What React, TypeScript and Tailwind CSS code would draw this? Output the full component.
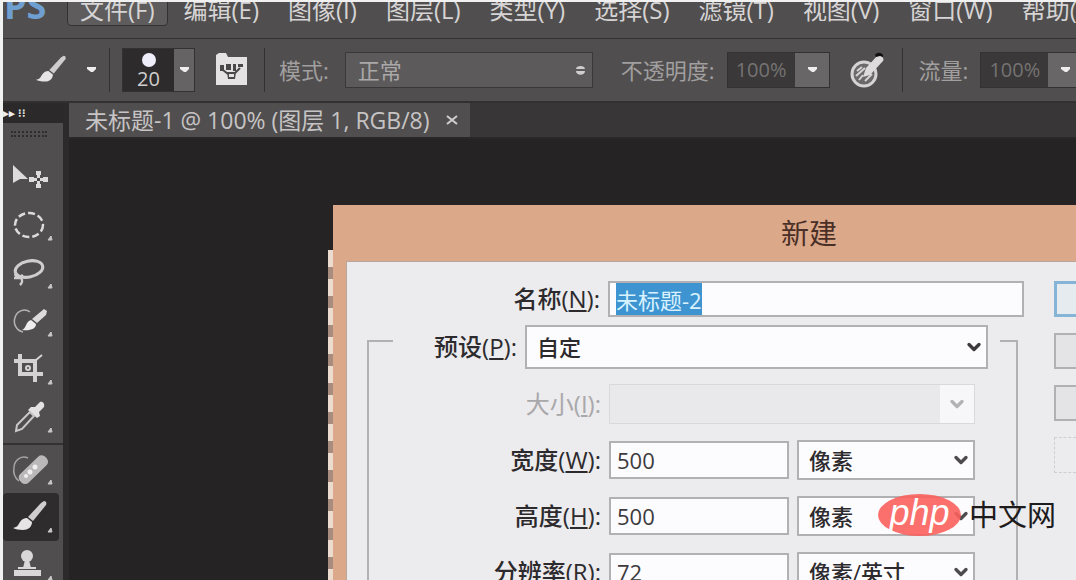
import { useEffect, useRef, type ReactNode } from 'react'
import { ChevronDown } from 'lucide-react'

const menus = [
  '文件(F)',
  '编辑(E)',
  '图像(I)',
  '图层(L)',
  '类型(Y)',
  '选择(S)',
  '滤镜(T)',
  '视图(V)',
  '窗口(W)',
  '帮助(H)',
]

function BrushShape() {
  return (
    <g>
      <path d="M41 8c2 0 3 2 2 4L30 28l-5-4L38 10z" fill="#cfcdcd" />
      <path d="M24 25l5 4c0 5-4 8-9 8-4 0-8-1-10-2 5-1 5-3 7-6 2-3 4-4 7-4z" fill="#e6e4e4" />
    </g>
  )
}

const tools: { name: string; corner: boolean; icon: ReactNode }[] = [
  {
    name: '移动工具',
    corner: false,
    icon: (
      <g fill="#dddbdb">
        <path d="M10 12l15 14-8 0-7 4z" />
        <path d="M33 18h5v4h-5zM33 31h5v4h-5zM26 24h5v5h-5zM40 24h5v5h-5zM30 25h11v3H30zM34 21h3v11h-3z" />
        <path d="M34 25h3v3h-3z" fill="#444" />
      </g>
    ),
  },
  {
    name: '椭圆选框工具',
    corner: true,
    icon: <ellipse cx="26" cy="24" rx="14" ry="12" fill="none" stroke="#dddbdb" strokeWidth="2.5" strokeDasharray="7 3" />,
  },
  {
    name: '套索工具',
    corner: true,
    icon: (
      <g fill="none" stroke="#cfcdcd">
        <ellipse cx="26" cy="20" rx="14" ry="8" strokeWidth="3" transform="rotate(-12 26 20)" />
        <path d="M12 25c1 4 6 3 8 1M11 29h7c2 2 1 5-1 7" strokeWidth="2.5" />
      </g>
    ),
  },
  {
    name: '快速选择工具',
    corner: true,
    icon: (
      <g>
        <path d="M27 15a10 11 0 1 0-7 20" fill="none" stroke="#b5b3b3" strokeWidth="1.5" />
        <path d="M41 12l3 2-1 4-9 8-5-4z" fill="#dddbdb" />
        <path d="M28 23l5 4c0 5-6 7-14 6 4-1 4-9 9-10z" fill="#efeded" />
      </g>
    ),
  },
  {
    name: '裁剪工具',
    corner: true,
    icon: (
      <g fill="none" stroke="#d3d1d1" strokeWidth="4">
        <path d="M17 9v20h23M11 16h21v21" />
        <path d="M33 15l6-5" strokeWidth="2" />
        <circle cx="25" cy="23" r="2" strokeWidth="2" />
      </g>
    ),
  },
  {
    name: '吸管工具',
    corner: true,
    icon: (
      <g>
        <path d="M37 9c3-1 5 2 4 5l-5 5 1 4-3 2-9-8 3-3 4 0z" fill="#e3e1e1" />
        <path d="M27 19l4 4-12 13-6 2 1-6z" fill="none" stroke="#c9c7c7" strokeWidth="2" />
      </g>
    ),
  },
  {
    name: '污点修复画笔工具',
    corner: true,
    icon: (
      <g>
        <path d="M25 13a10 11 0 0 0-14 9c-1 6 1 11 5 14" fill="none" stroke="#a5a3a3" strokeWidth="1.5" />
        <rect x="13" y="19" width="35" height="12" rx="5" fill="#bab8b8" transform="rotate(-44 30 25)" />
        <g fill="#f0eeee">
          <circle cx="27" cy="27" r="2.5" />
          <circle cx="32" cy="22" r="2.5" />
          <circle cx="23" cy="31" r="2" />
        </g>
      </g>
    ),
  },
  { name: '画笔工具', corner: true, icon: <BrushShape /> },
  {
    name: '仿制图章工具',
    corner: true,
    icon: (
      <g fill="#d9d7d7">
        <circle cx="24" cy="15" r="6" />
        <path d="M22 19h4l2 8h-8zM15 26h18v2H15zM11 29h27v6H11z" />
      </g>
    ),
  },
]

function Caret() {
  return (
    <svg width="12" height="8" viewBox="0 0 12 8" aria-hidden="true">
      <path d="M2 1h9v2L8 6H6L2 3z" fill="#efeded" />
    </svg>
  )
}

function Divider() {
  return <div className="h-11 w-px shrink-0 bg-[#333131]" />
}

function PercentField({ id, label }: { id: string; label: string }) {
  return (
    <div className="flex shrink-0 items-center gap-3">
      <label htmlFor={id} className="text-[22px] leading-6 text-[#a19f9f]">{label}</label>
      <div className="flex h-9 border border-[#333131]">
        <input
          id={id}
          defaultValue="100%"
          className="w-[67px] bg-[#3a3838] text-center text-xl text-[#757373] outline-none"
        />
        <button type="button" aria-label={`${label}选项`} className="flex w-[34px] items-center justify-center bg-[#686666]">
          <Caret />
        </button>
      </div>
    </div>
  )
}

function MenuBar() {
  return (
    <header className="flex h-9 items-start overflow-hidden bg-[#504e4e]">
      <div className="-mt-2 h-8 w-16 shrink-0 pl-px text-[36px] leading-6 font-bold text-[#6f9fd0]">PS</div>
      <nav className="-mt-2 flex gap-[3px]">
        {menus.map((menu, i) => (
          <button
            key={menu}
            type="button"
            className={
              i === 0
                ? 'h-8 shrink-0 rounded-sm border border-[#333131] bg-[#5e5c5c] px-3 text-2xl leading-6 whitespace-nowrap text-[#d6d4d4]'
                : 'h-8 shrink-0 border border-transparent px-3 text-2xl leading-6 whitespace-nowrap text-[#d6d4d4]'
            }
          >
            {menu}
          </button>
        ))}
      </nav>
    </header>
  )
}

function OptionsBar() {
  return (
    <div className="flex h-[65px] items-center overflow-hidden border-t border-b-2 border-t-[#333131] border-b-[#323030] bg-[#504e4e] pl-6">
      <button type="button" aria-label="画笔预设" className="flex shrink-0 items-center gap-2">
        <svg width="50" height="46" viewBox="0 0 56 48" aria-hidden="true">
          <BrushShape />
        </svg>
        <Caret />
      </button>
      <div className="ml-3 flex shrink-0 items-center gap-3">
        <Divider />
        <div className="flex h-11 border border-[#333131]">
          <div className="flex w-[51px] flex-col items-center bg-[#2d2b2b]">
            <span className="mt-1 size-3.5 shrink-0 rounded-full bg-[#eeeefa]" />
            <span className="text-xl leading-6 text-[#d0cece]">20</span>
          </div>
          <button type="button" aria-label="画笔大小" className="flex w-5 items-center justify-center bg-[#656363]">
            <Caret />
          </button>
        </div>
      </div>
      <button type="button" aria-label="画笔面板" className="ml-5 shrink-0">
        <svg width="33" height="36" viewBox="0 0 33 36" aria-hidden="true">
          <path d="M1 3l3-2h7l2 4h19v28H1z" fill="#e4e2e2" />
          <path d="M5 13h4v6H5zM11 12h5v6h-5zM18 12h3v7h-3zM23 12h5v3h-5zM12 20h9l-1 7h-7z" fill="#4a4848" />
          <path d="M14 22h5v3h-5z" fill="#e4e2e2" />
          <path d="M8 18l5 4M25 16l-5 5" stroke="#4a4848" strokeWidth="2" />
        </svg>
      </button>
      <div className="ml-4 flex shrink-0 items-center gap-3.5">
        <Divider />
        <label htmlFor="mode" className="text-[22px] leading-6 text-[#a19f9f]">模式:</label>
      </div>
      <div className="ml-4 grid w-[248px] shrink-0 items-center">
        <select
          id="mode"
          className="col-start-1 row-start-1 h-9 appearance-none border border-[#3a3838] bg-[#5c5a5a] px-3 text-[22px] leading-6 text-[#aaa8a8] outline-none"
        >
          <option>正常</option>
        </select>
        <svg className="pointer-events-none col-start-1 row-start-1 mr-2 justify-self-end" width="9" height="14" viewBox="0 0 9 14" aria-hidden="true">
          <path d="M0 6c0-4 9-4 9 0zM0 8h9c0 5-9 5-9 0z" fill="#d0cece" />
        </svg>
      </div>
      <div className="ml-7 flex shrink-0 items-center gap-4">
        <PercentField id="opacity" label="不透明度:" />
        <button type="button" aria-label="绘图板压力控制不透明度" className="ml-0.5">
          <svg width="38" height="38" viewBox="0 0 38 38" aria-hidden="true">
            <circle cx="16" cy="23" r="12" fill="#6b6969" stroke="#d5d3d3" strokeWidth="3" />
            <path d="M9 20l5-4M8 25l9-8M11 29l4-5M17 30l7-7" stroke="#d5d3d3" strokeWidth="2" />
            <path d="M15 26l3-9L29 5c3-2 8 2 6 5L22 24z" fill="#dddbdb" />
            <path d="M27 4c2-3 6-3 8 0v2l-3-1-4 1z" fill="#111" />
          </svg>
        </button>
        <Divider />
        <PercentField id="flow" label="流量:" />
      </div>
    </div>
  )
}

function Toolbox() {
  return (
    <aside className="w-[66px] shrink-0 overflow-hidden border-r-[6px] border-[#2c2a2a] bg-[#504e4e]">
      <div className="h-5 bg-[#2b2929] text-[11px] leading-5 font-bold text-[#efeded]">▸▸ ⁝⁝</div>
      <div className="h-[30px] px-2 pt-2">
        <div className="h-[6px] w-9 border-y-2 border-dotted border-[#2f2d2d]" />
      </div>
      {tools.map((tool, i) => (
        <div key={tool.name} className={i === 6 ? 'mt-[2px] border-t-2 border-[#333131]' : ''}>
          <button
            type="button"
            aria-label={tool.name}
            className={tool.name === '画笔工具' ? 'block rounded bg-[#2e2c2c]' : 'block'}
          >
            <svg width="56" height="48" viewBox="0 0 56 48" aria-hidden="true">
              {tool.icon}
              {tool.corner && <path d="M45 39l3-4 1 4z" fill="#c9c7c7" stroke="#c9c7c7" />}
            </svg>
          </button>
        </div>
      ))}
    </aside>
  )
}

function Access({ text, letter }: { text: string; letter: string }) {
  return (
    <>
      {text}(<u className="underline-offset-2">{letter}</u>):
    </>
  )
}

function UnitSelect({ id, label, unit }: { id: string; label: string; unit: string }) {
  return (
    <div className="grid w-[178px] shrink-0 items-center">
      <select
        id={id}
        aria-label={label}
        className="col-start-1 row-start-1 h-10 appearance-none border-2 border-[#b1b0b3] bg-[#fcfbfd] px-2.5 text-[22px] leading-6 font-medium text-[#2c2a2c] outline-none"
      >
        <option>{unit}</option>
      </select>
      <ChevronDown className="pointer-events-none col-start-1 row-start-1 mr-1 justify-self-end text-[#4d4b4d]" size={20} strokeWidth={4} />
    </div>
  )
}

function SizeRow({ id, text, letter, value, unit }: { id: string; text: string; letter: string; value: string; unit: string }) {
  return (
    <div className="flex items-center gap-2">
      <label htmlFor={id} className="w-[232px] shrink-0 text-right text-2xl leading-6 font-medium">
        <Access text={text} letter={letter} />
      </label>
      <input
        id={id}
        defaultValue={value}
        className="h-[38px] min-w-0 flex-1 border-2 border-[#b1b0b3] bg-[#fcfbfd] px-1.5 text-[22px] font-medium text-[#3c3a3c] outline-none"
      />
      <UnitSelect id={`${id}-unit`} label={`${text}单位`} unit={unit} />
    </div>
  )
}

function NewDialog() {
  const nameRef = useRef<HTMLInputElement>(null)

  useEffect(() => {
    nameRef.current?.focus()
    nameRef.current?.select()
  }, [])

  return (
    <section role="dialog" aria-label="新建" className="flex min-w-0 flex-1 flex-col bg-[#dba88a] pl-[13px]">
      <h1 className="h-14 shrink-0 pl-[435px] text-[28px] leading-[56px] text-[#4a2f26]">新建</h1>
      <form className="flex flex-1 gap-[30px] border-t border-l border-[#b9a79e] bg-[#ecebed] pt-[19px] text-[#2c2a2c]">
        <div className="flex min-w-0 flex-1 flex-col">
          <div className="flex items-center gap-2">
            <label htmlFor="name" className="w-[253px] shrink-0 text-right text-2xl leading-6 font-medium">
              <Access text="名称" letter="N" />
            </label>
            <input
              id="name"
              ref={nameRef}
              defaultValue="未标题-2"
              className="h-9 min-w-0 flex-1 border-2 border-[#b1b0b3] bg-[#fcfbfd] px-1.5 text-[22px] leading-[26px] outline-none selection:bg-[#3d94d0] selection:text-[#d9f2ff]"
            />
          </div>
          <fieldset className="mt-2 mr-[6px] ml-5 min-w-0 flex-1 border-2 border-[#b1b0b3]">
            <legend className="ml-6 flex h-8 w-[calc(100%-40px)] items-start gap-2">
              <label htmlFor="preset" className="w-[124px] shrink-0 text-right text-2xl leading-[44px] font-medium whitespace-nowrap">
                <Access text="预设" letter="P" />
              </label>
              <div className="mr-3 grid flex-1 items-center">
                <select
                  id="preset"
                  className="col-start-1 row-start-1 h-11 appearance-none border-2 border-[#b1b0b3] bg-[#fcfbfd] px-2.5 text-[22px] leading-6 font-medium outline-none"
                >
                  <option>自定</option>
                </select>
                <ChevronDown className="pointer-events-none col-start-1 row-start-1 mr-1 justify-self-end text-[#3c3a3c]" size={20} strokeWidth={4} />
              </div>
            </legend>
            <div className="flex flex-col gap-4 pt-[27px] pr-[41px]">
              <div className="flex items-center gap-2">
                <label htmlFor="size" className="w-[232px] shrink-0 text-right text-2xl leading-6 text-[#a9a8ab]">
                  <Access text="大小" letter="I" />
                </label>
                <div className="grid flex-1 items-center">
                  <select
                    id="size"
                    disabled
                    className="col-start-1 row-start-1 h-10 appearance-none border border-[#d9d8da] bg-[#e9e8ea] outline-none"
                  />
                  <div className="pointer-events-none col-start-1 row-start-1 mr-px flex h-[38px] w-[34px] items-center justify-center justify-self-end bg-[#f7f6f8]">
                    <ChevronDown className="text-[#b3b2b5]" size={20} strokeWidth={4} />
                  </div>
                </div>
              </div>
              <SizeRow id="width" text="宽度" letter="W" value="500" unit="像素" />
              <SizeRow id="height" text="高度" letter="H" value="500" unit="像素" />
              <SizeRow id="resolution" text="分辨率" letter="R" value="72" unit="像素/英寸" />
            </div>
          </fieldset>
        </div>
        <div className="flex w-[22px] shrink-0 flex-col gap-4">
          <button type="button" aria-label="确定" className="h-9 border-3 border-r-0 border-[#86b4d6] bg-[#e6ebef]" />
          <button type="button" aria-label="取消" className="h-9 border-2 border-r-0 border-[#b1b0b3] bg-[#e4e3e5]" />
          <button type="button" aria-label="存储预设" className="h-9 border-2 border-r-0 border-[#b1b0b3] bg-[#e4e3e5]" />
          <button type="button" aria-label="删除预设" disabled className="h-9 border border-r-0 border-dashed border-[#cfced1]" />
        </div>
      </form>
    </section>
  )
}

function Watermark() {
  return (
    <div className="absolute right-5 bottom-11 flex items-center gap-2">
      <div className="flex h-[42px] w-[83px] items-center justify-center rounded-[50%] bg-[#fb5f5c]/90 font-['Liberation_Sans'] text-[36px] leading-8 text-white italic">
        <span className="pb-1">php</span>
      </div>
      <span className="text-[29px] leading-8 text-[#1d1b1c]">中文网</span>
    </div>
  )
}

export default function App() {
  return (
    <div className="relative flex h-screen flex-col overflow-hidden bg-[#f1f1f1] pt-0.5 pl-[3px] font-['Open_Sans','Noto_Sans_CJK_SC',sans-serif]">
      <MenuBar />
      <OptionsBar />
      <div className="flex min-h-0 flex-1">
        <Toolbox />
        <main className="flex min-w-0 flex-1 flex-col bg-[#252323]">
          <div className="flex h-9 shrink-0 border-b-2 border-[#2a2828] bg-[#383636]">
            <div className="flex items-center gap-4 bg-[#504e4e] pr-3 pl-4 text-[23px] leading-6 whitespace-nowrap text-[#c6c4c4]">
              未标题-1 @ 100% (图层 1, RGB/8)
              <button type="button" aria-label="关闭">
                <svg width="12" height="12" viewBox="0 0 12 12" aria-hidden="true">
                  <path d="M1 2l10 8M11 2L1 10" stroke="#d0cece" strokeWidth="2" />
                </svg>
              </button>
            </div>
          </div>
          <div className="flex min-h-0 flex-1 pt-[66px] pl-[259px]">
            {/* edge of the open document, transparent checkerboard */}
            <div className="mt-[45px] w-[5px] shrink-0 bg-[repeating-linear-gradient(#ecdccf_0_17px,#a88c7e_17px_29px)]" />
            <NewDialog />
          </div>
        </main>
      </div>
      <Watermark />
    </div>
  )
}
